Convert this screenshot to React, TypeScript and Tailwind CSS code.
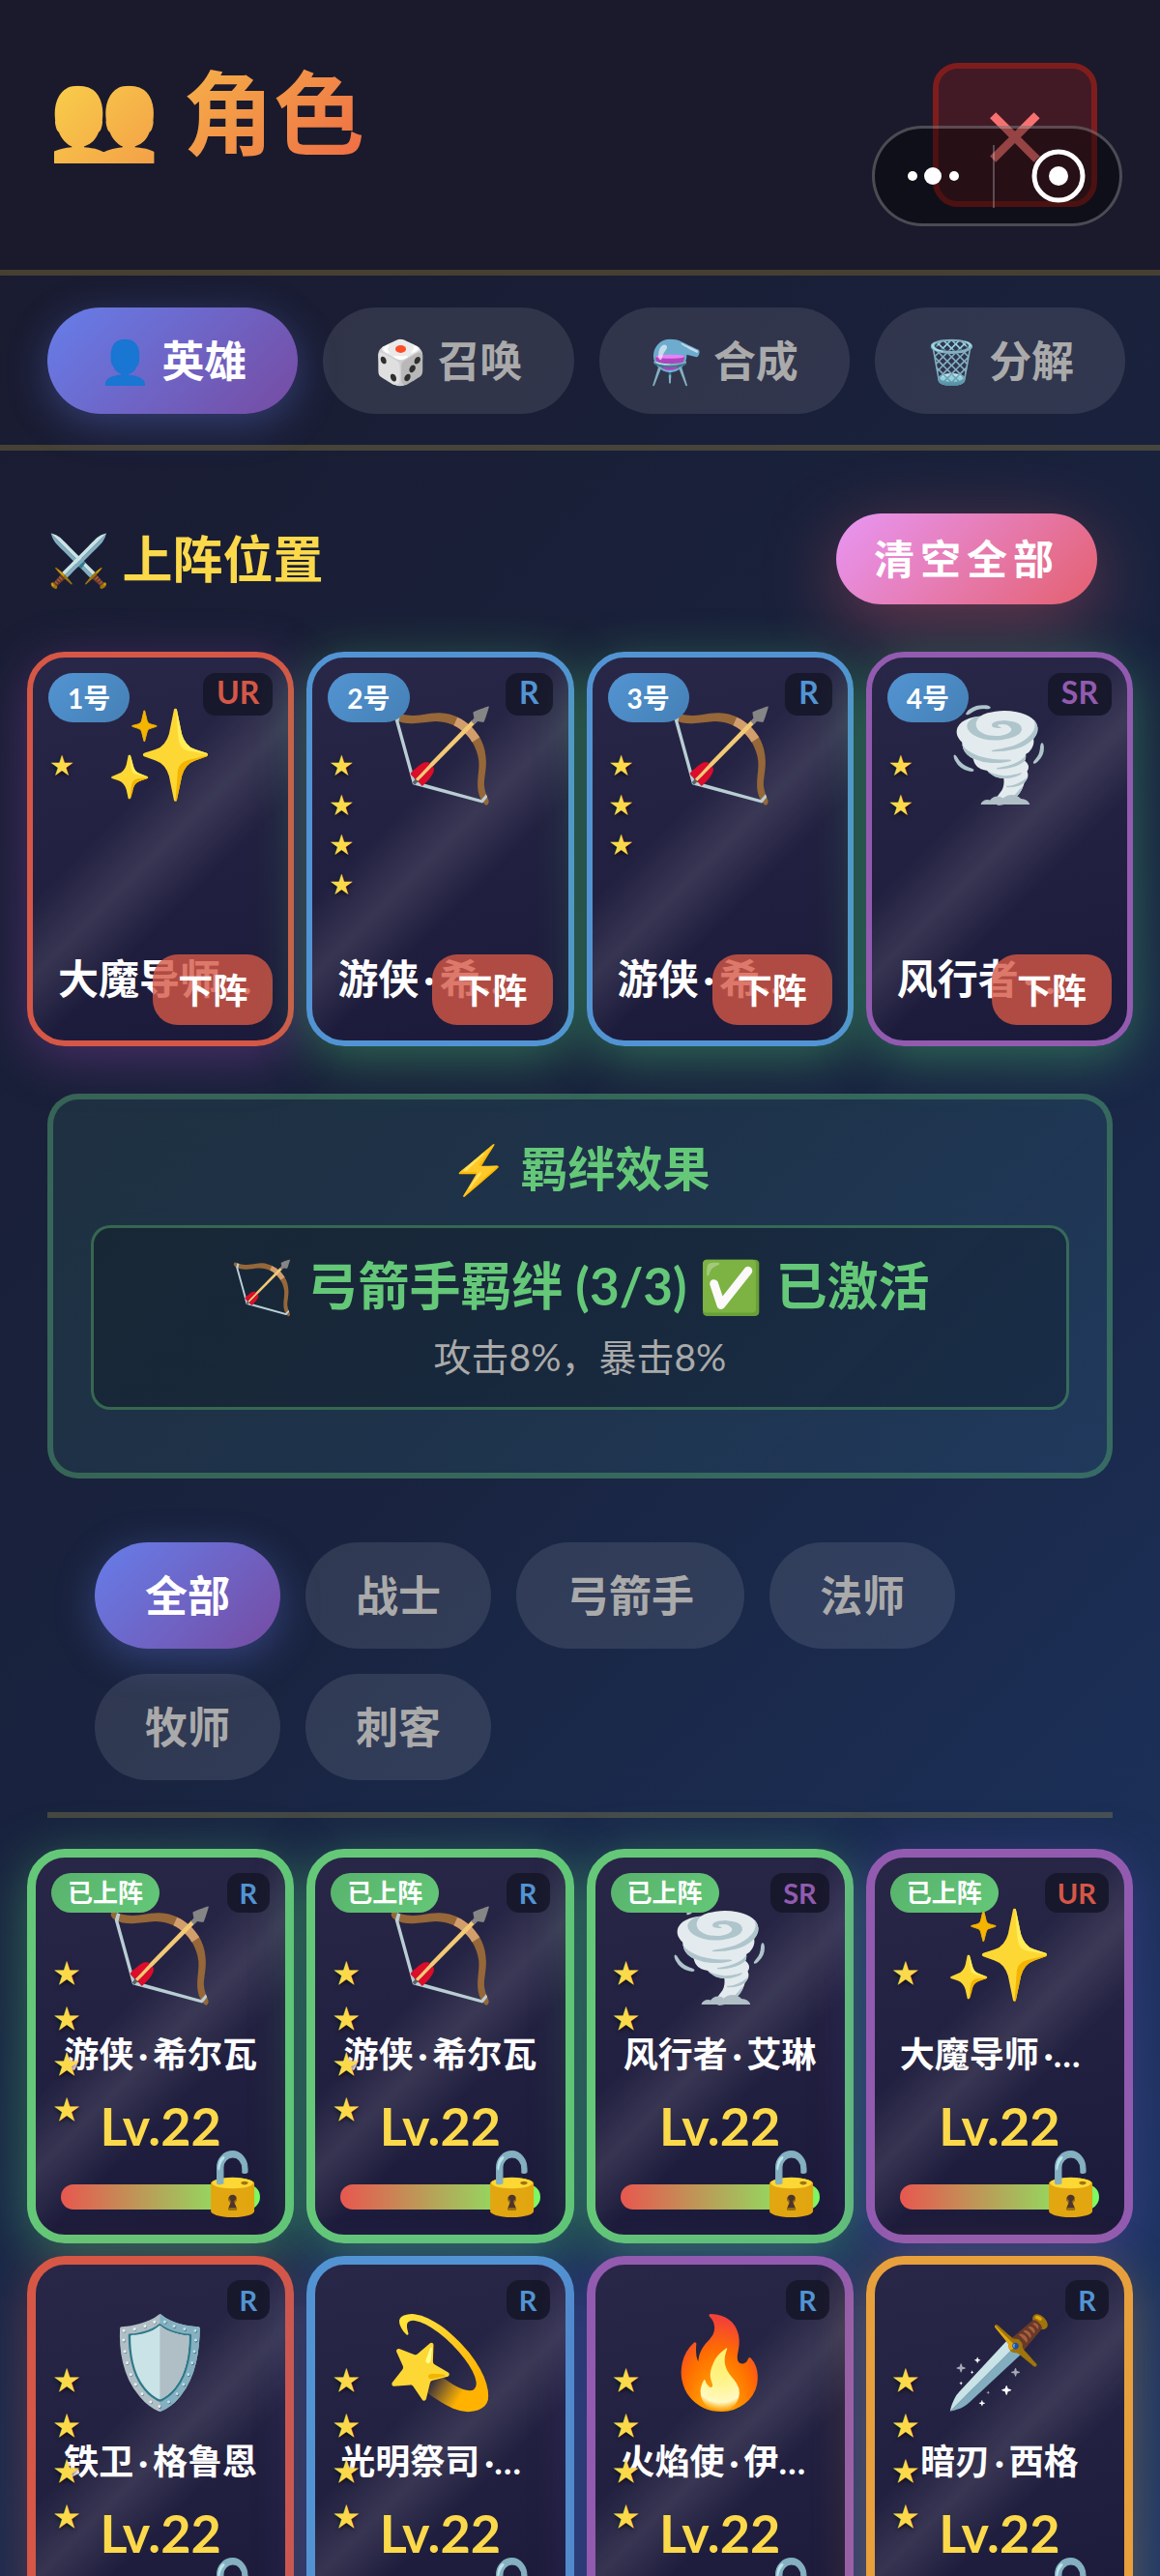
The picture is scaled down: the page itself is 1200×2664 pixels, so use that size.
import { useState } from "react";
import clsx from "clsx";

type Rarity = "R" | "SR" | "UR";
type Tone = "red" | "blue" | "purple" | "green" | "orange";

interface Hero {
  id: number;
  title: string;
  name: string;
  icon: string;
  rarity: Rarity;
  stars: number;
  tone: Tone;
  deployed?: boolean;
}

const tabs = [
  { key: "heroes", icon: "👤", label: "英雄" },
  { key: "summon", icon: "🎲", label: "召唤" },
  { key: "fuse", icon: "⚗️", label: "合成" },
  { key: "dismantle", icon: "🗑️", label: "分解" },
];

const filters = ["全部", "战士", "弓箭手", "法师", "牧师", "刺客"];

const lineup: Hero[] = [
  { id: 1, title: "大魔导师", name: "梅林", icon: "✨", rarity: "UR", stars: 1, tone: "red" },
  { id: 2, title: "游侠", name: "希尔瓦", icon: "🏹", rarity: "R", stars: 4, tone: "blue" },
  { id: 3, title: "游侠", name: "希尔瓦", icon: "🏹", rarity: "R", stars: 3, tone: "blue" },
  { id: 4, title: "风行者", name: "艾琳", icon: "🌪️", rarity: "SR", stars: 2, tone: "purple" },
];

const heroes: Hero[] = [
  { id: 1, title: "游侠", name: "希尔瓦", icon: "🏹", rarity: "R", stars: 4, tone: "green", deployed: true },
  { id: 2, title: "游侠", name: "希尔瓦", icon: "🏹", rarity: "R", stars: 4, tone: "green", deployed: true },
  { id: 3, title: "风行者", name: "艾琳", icon: "🌪️", rarity: "SR", stars: 2, tone: "green", deployed: true },
  { id: 4, title: "大魔导师", name: "梅林", icon: "✨", rarity: "UR", stars: 1, tone: "purple", deployed: true },
  { id: 5, title: "铁卫", name: "格鲁恩", icon: "🛡️", rarity: "R", stars: 4, tone: "red" },
  { id: 6, title: "光明祭司", name: "伊莲", icon: "💫", rarity: "R", stars: 4, tone: "blue" },
  { id: 7, title: "火焰使", name: "伊格尼", icon: "🔥", rarity: "R", stars: 4, tone: "purple" },
  { id: 8, title: "暗刃", name: "西格", icon: "🗡️", rarity: "R", stars: 4, tone: "orange" },
];

const rarityColor: Record<Rarity, string> = {
  R: "text-[#5294d3]",
  SR: "text-[#925bb0]",
  UR: "text-[#d65746]",
};

const borderColor: Record<Tone, string> = {
  red: "border-[#d65746]",
  blue: "border-[#5294d3]",
  purple: "border-[#925bb0]",
  green: "border-[#64c878]",
  orange: "border-[#e8a03c]",
};

const heroGlow: Record<Tone, string> = {
  red: "shadow-[0_12px_52px_rgba(214,87,70,0.3)]",
  blue: "shadow-[0_12px_52px_rgba(82,110,211,0.35)]",
  purple: "shadow-[0_12px_52px_rgba(84,72,170,0.5)]",
  green: "shadow-[0_12px_52px_rgba(72,180,110,0.5)]",
  orange: "shadow-[0_12px_52px_rgba(232,160,60,0.35)]",
};

const cardBg =
  "bg-[linear-gradient(135deg,transparent_38%,rgba(255,255,255,0.1)_50%,transparent_62%),linear-gradient(170deg,#292747,#1c1a3a)]";

const pill = "h-[110px] rounded-full text-[44px] font-bold";
const pillActive =
  "bg-[linear-gradient(135deg,#667eea,#764ba2)] text-white shadow-[0_10px_40px_rgba(102,126,234,0.35)]";
const pillIdle = "bg-white/10 text-[#aaaaaa]";

function HeroName({ hero }: { hero: Hero }) {
  return (
    <>
      {hero.title}
      <span className="mx-[5px]">·</span>
      {hero.name}
    </>
  );
}

function Stars({ count, large }: { count: number; large?: boolean }) {
  return (
    <div
      className={clsx(
        "absolute flex flex-col text-[#fcd94a] [text-shadow:0_2px_4px_rgba(0,0,0,0.6)]",
        large ? "left-[18px] top-[96px] text-[28px] leading-[47px]" : "left-[18px] top-[90px] text-[24px] leading-[41px]",
      )}
    >
      {Array.from({ length: count }, (_, i) => (
        <span key={i}>★</span>
      ))}
    </div>
  );
}

function LineupCard({ hero, onRemove }: { hero: Hero; onRemove: () => void }) {
  return (
    <article
      className={clsx(
        "relative flex h-[408px] flex-col justify-between rounded-[39px] border-[6px] px-[26px] pb-8 pt-10",
        borderColor[hero.tone],
        cardBg,
        hero.rarity === "UR"
          ? "shadow-[0_12px_52px_rgba(146,70,176,0.4)]"
          : "shadow-[0_12px_52px_rgba(72,190,110,0.45)]",
      )}
    >
      <div className="flex justify-center text-[92px] leading-[116px]">{hero.icon}</div>
      <h3 className="truncate text-[42px] font-bold leading-[64px] text-white">
        <HeroName hero={hero} />
      </h3>
      <span className="absolute left-4 top-4 flex h-[51px] items-center rounded-full bg-[linear-gradient(135deg,#5294d3,#4580b5)] px-5 text-[28px] font-bold text-white">
        {hero.id}号
      </span>
      <span
        className={clsx(
          "absolute right-4 top-4 flex h-[44px] items-center rounded-[13px] bg-[#18182c] px-[14px] pb-1 text-[32px] font-bold",
          rarityColor[hero.rarity],
        )}
      >
        {hero.rarity}
      </span>
      <Stars count={hero.stars} />
      <button
        onClick={onRemove}
        className="absolute bottom-4 right-4 h-[73px] rounded-[26px] bg-[#d55846]/80 px-[26px] text-[36px] font-bold text-white"
      >
        下阵
      </button>
    </article>
  );
}

function HeroCard({ hero }: { hero: Hero }) {
  return (
    <article
      className={clsx(
        "relative flex h-[408px] flex-col rounded-[39px] border-[9px] px-[26px] pt-10",
        borderColor[hero.tone],
        heroGlow[hero.tone],
        cardBg,
      )}
    >
      <div className="flex justify-center text-[92px] leading-[116px]">{hero.icon}</div>
      <h3 className="mt-[21px] truncate text-center text-[36px] font-bold leading-[52px] text-white">
        <HeroName hero={hero} />
      </h3>
      <p className="mt-[13px] text-center text-[54px] font-bold leading-[72px] text-[#fcd94a]">Lv.22</p>
      <div className="mt-6 h-[26px] rounded-full bg-[linear-gradient(90deg,#e8574f,#7cfc64)]" />
      {hero.deployed && (
        <span className="absolute left-4 top-4 flex h-[41px] items-center rounded-full bg-[linear-gradient(135deg,#58b26c,#64c878)] px-[17px] text-[26px] font-bold text-white">
          已上阵
        </span>
      )}
      <span
        className={clsx(
          "absolute right-4 top-4 flex h-[41px] items-center rounded-[13px] bg-[#18182c] px-[13px] text-[29px] font-bold",
          rarityColor[hero.rarity],
        )}
      >
        {hero.rarity}
      </span>
      <Stars count={hero.stars} large />
      <button aria-label="锁定" className="absolute bottom-4 right-4 text-[62px] leading-[78px]">
        🔓
      </button>
    </article>
  );
}

function Capsule() {
  return (
    <div className="absolute right-[39px] top-[130px] flex h-[104px] items-center rounded-full border-[3px] border-white/25 bg-black/40">
      <svg width="253" height="98" viewBox="0 0 253 98" fill="#fff">
        <circle cx="39" cy="49" r="5" />
        <circle cx="60" cy="49" r="9" />
        <circle cx="82" cy="49" r="5" />
        <rect x="122" y="17" width="2" height="65" opacity="0.25" />
        <circle cx="190" cy="49" r="25" fill="none" stroke="#fff" strokeWidth="5" />
        <circle cx="190" cy="49" r="10" />
      </svg>
    </div>
  );
}

export default function App() {
  const [tab, setTab] = useState("heroes");
  const [filter, setFilter] = useState("全部");
  const [slots, setSlots] = useState(lineup);

  return (
    <div
      lang="zh-CN"
      className="h-screen overflow-hidden bg-[linear-gradient(135deg,#1a1a2e_0%,#19233f_50%,#1d3868_100%)] font-['Lato','Noto_Sans_CJK_SC','Noto_Color_Emoji',sans-serif]"
    >
      {/* Header */}
      <header className="relative flex items-start justify-between border-b-[6px] border-[#fcd94a]/20 bg-[#1a1a2c] py-[65px] pl-[49px] pr-[65px]">
        <h1 className="bg-[linear-gradient(135deg,#f9d54a,#ee6b45)] bg-clip-text text-[94px] font-bold leading-[104px] text-transparent">
          👥 角色
        </h1>
        <button
          aria-label="关闭"
          className="h-[149px] w-[170px] rounded-[26px] border-[6px] border-[#7f1d1d] bg-[#421a26] text-[88px] leading-none text-[#f87171]"
        >
          ✕
        </button>
        <Capsule />
      </header>

      {/* Tabs */}
      <nav className="grid grid-cols-4 gap-[26px] border-b-[6px] border-[#fcd94a]/20 pb-8 pl-[49px] pr-9 pt-[33px]">
        {tabs.map((t) => (
          <button key={t.key} onClick={() => setTab(t.key)} className={clsx(pill, tab === t.key ? pillActive : pillIdle)}>
            {t.icon} {t.label}
          </button>
        ))}
      </nav>

      <main>
        {/* Lineup */}
        <div className="flex items-center justify-between pl-[49px] pr-[65px] pt-[65px]">
          <h2 className="text-[52px] font-bold leading-[64px] text-[#fcd94a]">⚔️ 上阵位置</h2>
          <button
            onClick={() => setSlots([])}
            className="h-[94px] rounded-full bg-[linear-gradient(135deg,#e896f5,#e4606e)] px-[39px] text-[42px] font-bold tracking-[6px] text-white shadow-[0_20px_78px_rgba(228,96,110,0.4)]"
          >
            清空全部
          </button>
        </div>
        <section className="mt-[49px] grid grid-cols-4 gap-[13px] px-7">
          {slots.map((h) => (
            <LineupCard key={h.id} hero={h} onRemove={() => setSlots(slots.filter((s) => s.id !== h.id))} />
          ))}
        </section>

        {/* Bonds */}
        <section className="mx-[49px] mt-[49px] rounded-[32px] border-[6px] border-[#64c878]/35 bg-[linear-gradient(135deg,rgba(72,170,130,0.12),rgba(72,160,190,0.13))] px-[39px] pb-[65px] pt-[38px] text-center">
          <h2 className="text-[49px] font-bold leading-[66px] text-[#64c878]">⚡ 羁绊效果</h2>
          <div className="mt-[26px] rounded-[20px] border-[3px] border-[#64c878]/40 bg-black/20 py-[26px]">
            <h3 className="text-[53px] font-bold leading-[68px] text-[#64c878]">🏹 弓箭手羁绊 (3/3) ✅ 已激活</h3>
            <p className="mt-[13px] text-[39px] leading-[52px] text-[#aaaaaa]">攻击8%，暴击8%</p>
          </div>
        </section>

        {/* Class filter */}
        <div className="mx-[49px] mt-[66px] flex flex-wrap gap-[26px] border-b-[6px] border-[#fcd94a]/20 px-[49px] pb-[33px]">
          {filters.map((f) => (
            <button
              key={f}
              onClick={() => setFilter(f)}
              className={clsx(pill, "px-[52px]", filter === f ? pillActive : pillIdle)}
            >
              {f}
            </button>
          ))}
        </div>

        {/* Hero list */}
        <section className="mt-8 grid grid-cols-4 gap-[13px] px-7">
          {heroes.map((h) => (
            <HeroCard key={h.id} hero={h} />
          ))}
        </section>
      </main>
    </div>
  );
}
